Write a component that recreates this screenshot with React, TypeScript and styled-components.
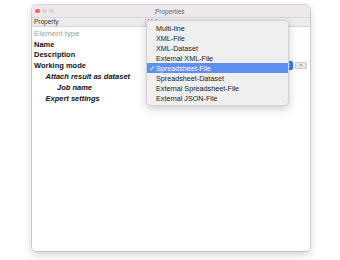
import { createGlobalStyle, styled } from 'styled-components';

const GlobalStyle = createGlobalStyle`
  html, body {
    margin: 0;
    padding: 0;
    background: #ffffff;
  }
  body {
    font-family: 'Liberation Sans', Arial, sans-serif;
    -webkit-font-smoothing: antialiased;
  }
`;

const Stage = styled.div`
  width: 340px;
  height: 260px;
  padding: 5px 0 0 32px;
  box-sizing: border-box;
`;

const Window = styled.div`
  position: relative;
  width: 278px;
  height: 246px;
  background: #ffffff;
  border-radius: 4px;
  box-shadow:
    0 0 0 0.5px rgba(0, 0, 0, 0.25),
    0 3px 8px rgba(0, 0, 0, 0.2);
  display: flex;
  flex-direction: column;
`;

const TitleBar = styled.div`
  height: 12px;
  flex: none;
  display: flex;
  align-items: center;
  background: #ece8ec;
  border-radius: 4px 4px 0 0;
  border-bottom: 1px solid #dcd8dc;
`;

const Lights = styled.div`
  display: flex;
  gap: 2.5px;
  padding-left: 3px;
`;

const Light = styled.span<{ $color: string }>`
  width: 4.5px;
  height: 4.5px;
  border-radius: 50%;
  background: ${(p) => p.$color};
`;

const Title = styled.div`
  flex: 1;
  text-align: center;
  font-size: 6.5px;
  color: #6a666a;
  margin-right: 24px;
`;

const Header = styled.div`
  height: 8px;
  flex: none;
  display: grid;
  grid-template-columns: 113px 1fr;
  background: #ebebeb;
  border-bottom: 1px solid #d6d6d6;
  font-size: 6.5px;
  color: #333;
  line-height: 8px;
`;

const HeaderCell = styled.div`
  padding-left: 2px;
  & + & {
    border-left: 1px solid #d0d0d0;
  }
`;

const Rows = styled.div`
  padding-top: 1px;
  display: flex;
  flex-direction: column;
`;

const Row = styled.div`
  height: 10.8px;
  display: grid;
  grid-template-columns: 113px 1fr;
  align-items: center;
`;

const Label = styled.div<{ $indent: number; $italic?: boolean; $muted?: boolean }>`
  padding-left: ${(p) => 2 + p.$indent * 11.5}px;
  font-size: ${(p) => (p.$muted ? 7.8 : 7.5)}px;
  font-weight: ${(p) => (p.$muted ? 400 : 700)};
  font-style: ${(p) => (p.$italic ? 'italic' : 'normal')};
  color: ${(p) => (p.$muted ? '#9c9c9c' : '#111')};
  white-space: nowrap;
`;

const ValueCell = styled.div`
  display: flex;
  align-items: center;
  justify-content: flex-end;
  gap: 2px;
  padding-right: 3px;
`;

const Stepper = styled.div`
  width: 9px;
  height: 9px;
  border-radius: 2px;
  background: #2f7df6;
  display: flex;
  align-items: center;
  justify-content: center;
`;

const SmallButton = styled.div`
  width: 10px;
  height: 5px;
  background: #e6e6e6;
  border: 0.5px solid #cfcfcf;
  border-radius: 1px;
  font-size: 5px;
  line-height: 5px;
  text-align: center;
  color: #444;
`;

const Menu = styled.div`
  position: absolute;
  left: 114px;
  top: 15px;
  width: 141px;
  padding: 2px 0;
  background: #efefef;
  border-radius: 4px;
  border: 0.5px solid #d2d2d2;
  box-shadow: 0 3px 8px rgba(0, 0, 0, 0.2);
`;

const MenuItem = styled.div<{ $active?: boolean }>`
  height: 10px;
  display: flex;
  align-items: center;
  font-size: 7.2px;
  color: ${(p) => (p.$active ? '#ffffff' : '#1a1a1a')};
  background: ${(p) => (p.$active ? '#5d8fee' : 'transparent')};
  white-space: nowrap;
`;

const Check = styled.span`
  width: 9px;
  padding-left: 1.5px;
  box-sizing: border-box;
  font-size: 8px;
`;

const properties = [
  { label: 'Element type', indent: 0, muted: true },
  { label: 'Name', indent: 0 },
  { label: 'Description', indent: 0 },
  { label: 'Working mode', indent: 0, select: true },
  { label: 'Attach result as dataset', indent: 1, italic: true },
  { label: 'Job name', indent: 2, italic: true },
  { label: 'Expert settings', indent: 1, italic: true },
];

const modes = [
  'Multi-line',
  'XML-File',
  'XML-Dataset',
  'External XML-File',
  'Spreadsheet-File',
  'Spreadsheet-Dataset',
  'External Spreadsheet-File',
  'External JSON-File',
];

export default function App() {
  return (
    <Stage>
      <GlobalStyle />
      <Window>
        <TitleBar>
          <Lights>
            <Light $color="#fe5f57" />
            <Light $color="#d7d3d7" />
            <Light $color="#d7d3d7" />
          </Lights>
          <Title>Properties</Title>
        </TitleBar>
        <Header>
          <HeaderCell>Property</HeaderCell>
          <HeaderCell>Value</HeaderCell>
        </Header>
        <Rows>
          {properties.map((p) => (
            <Row key={p.label}>
              <Label $indent={p.indent} $italic={p.italic} $muted={p.muted}>
                {p.label}
              </Label>
              <ValueCell>
                {p.select && (
                  <>
                    <Stepper>
                      <svg width="5" height="7" viewBox="0 0 5 7">
                        <path d="M1 2.6 L2.5 1.2 L4 2.6 M1 4.4 L2.5 5.8 L4 4.4" fill="none" stroke="#fff" strokeWidth="0.9" />
                      </svg>
                    </Stepper>
                    <SmallButton>&gt;</SmallButton>
                  </>
                )}
              </ValueCell>
            </Row>
          ))}
        </Rows>
        <Menu>
          {modes.map((m) => (
            <MenuItem key={m} $active={m === 'Spreadsheet-File'}>
              <Check>{m === 'Spreadsheet-File' ? '✓' : ''}</Check>
              {m}
            </MenuItem>
          ))}
        </Menu>
      </Window>
    </Stage>
  );
}
